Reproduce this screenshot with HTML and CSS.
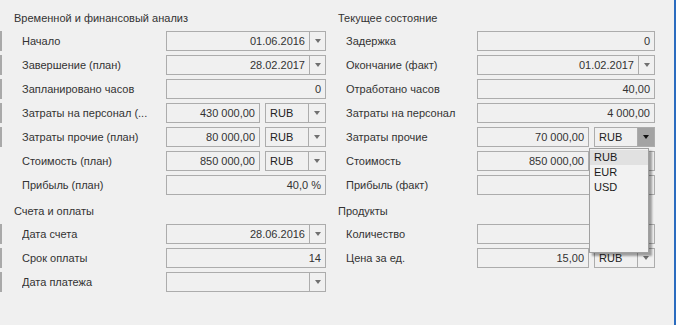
FILE: index.html
```html
<!DOCTYPE html>
<html lang="ru">
<head>
    <meta charset="UTF-8">
    <title>Анализ проекта</title>
    <link rel="stylesheet" href="styles.css">
</head>
<body>
<div class="window">
    <div class="col col-left">
        <div class="group-title">Временной и финансовый анализ</div>
        <div class="row mark">
            <span class="label">Начало</span>
            <div class="edit wide"><span class="value">01.06.2016</span><span class="btn date"></span></div>
        </div>
        <div class="row mark">
            <span class="label">Завершение (план)</span>
            <div class="edit wide"><span class="value">28.02.2017</span><span class="btn date"></span></div>
        </div>
        <div class="row mark">
            <span class="label">Запланировано часов</span>
            <div class="edit wide"><span class="value">0</span></div>
        </div>
        <div class="row mark">
            <span class="label">Затраты на персонал (...</span>
            <div class="edit num"><span class="value">430 000,00</span></div>
            <div class="edit cur"><span class="text">RUB</span><span class="btn"></span></div>
        </div>
        <div class="row mark">
            <span class="label">Затраты прочие (план)</span>
            <div class="edit num"><span class="value">80 000,00</span></div>
            <div class="edit cur"><span class="text">RUB</span><span class="btn"></span></div>
        </div>
        <div class="row">
            <span class="label">Стоимость (план)</span>
            <div class="edit num"><span class="value">850 000,00</span></div>
            <div class="edit cur"><span class="text">RUB</span><span class="btn"></span></div>
        </div>
        <div class="row">
            <span class="label">Прибыль (план)</span>
            <div class="edit wide"><span class="value">40,0 %</span></div>
        </div>

        <div class="group-title second">Счета и оплаты</div>
        <div class="row mark">
            <span class="label">Дата счета</span>
            <div class="edit wide"><span class="value">28.06.2016</span><span class="btn date"></span></div>
        </div>
        <div class="row mark">
            <span class="label">Срок оплаты</span>
            <div class="edit wide"><span class="value">14</span></div>
        </div>
        <div class="row mark">
            <span class="label">Дата платежа</span>
            <div class="edit wide"><span class="value"></span><span class="btn date"></span></div>
        </div>
    </div>

    <div class="col col-right">
        <div class="group-title">Текущее состояние</div>
        <div class="row">
            <span class="label">Задержка</span>
            <div class="edit wide"><span class="value">0</span></div>
        </div>
        <div class="row">
            <span class="label">Окончание (факт)</span>
            <div class="edit wide"><span class="value">01.02.2017</span><span class="btn date"></span></div>
        </div>
        <div class="row">
            <span class="label">Отработано часов</span>
            <div class="edit wide"><span class="value">40,00</span></div>
        </div>
        <div class="row">
            <span class="label">Затраты на персонал</span>
            <div class="edit wide"><span class="value">4 000,00</span></div>
        </div>
        <div class="row">
            <span class="label">Затраты прочие</span>
            <div class="edit num"><span class="value">70 000,00</span></div>
            <div class="edit cur open">
                <span class="text">RUB</span><span class="btn"></span>
                <ul class="popup">
                    <li class="selected">RUB</li>
                    <li>EUR</li>
                    <li>USD</li>
                </ul>
            </div>
        </div>
        <div class="row">
            <span class="label">Стоимость</span>
            <div class="edit num"><span class="value">850 000,00</span></div>
            <!-- covered by the open list -->
            <div class="edit cur"><span class="text"></span><span class="btn"></span></div>
        </div>
        <div class="row">
            <span class="label">Прибыль (факт)</span>
            <div class="edit wide"><span class="value"></span></div>
        </div>

        <div class="group-title second">Продукты</div>
        <div class="row">
            <span class="label">Количество</span>
            <div class="edit wide"><span class="value"></span></div>
        </div>
        <div class="row">
            <span class="label">Цена за ед.</span>
            <div class="edit num"><span class="value">15,00</span></div>
            <div class="edit cur"><span class="text">RUB</span><span class="btn"></span></div>
        </div>
    </div>
</div>
</body>
</html>
```

FILE: styles.css
```css
body {
    margin: 0;
    background-color: #f0f0f0;
    font-family: "Liberation Sans", Arial, sans-serif;
    font-size: 11px;
    color: #333;
}
.window {
    display: flex;
    width: 676px;
    height: 325px;
    box-sizing: border-box;
    border-right: 2px solid #2b6cbf;
    overflow: hidden;
}
.col {
    padding-top: 11px;
    box-sizing: border-box;
}
.col-left {
    width: 330px;
}
.col-right {
    width: 344px;
}
.group-title {
    height: 14px;
    line-height: 14px;
    margin-bottom: 6px;
    padding-left: 14px;
}
.group-title.second {
    margin-top: 9px;
}
.col-right .group-title {
    padding-left: 8px;
}
.row {
    display: flex;
    align-items: center;
    height: 20px;
    margin-bottom: 4px;
    padding-left: 22px;
}
.row.mark {
    border-left: 2px solid #a9a9a9;
    padding-left: 20px;
}
.col-right .row {
    padding-left: 16px;
}
.label {
    width: 144px;
    white-space: nowrap;
    overflow: hidden;
}
.col-right .label {
    width: 131px;
}

/* edits */
.edit {
    display: flex;
    height: 20px;
    box-sizing: border-box;
    border: 1px solid #acacac;
    line-height: 18px;
}
.edit.wide {
    width: 160px;
}
.edit.num {
    width: 94px;
    margin-right: 5px;
}
.edit.cur {
    width: 61px;
}
.col-right .edit.wide {
    width: 178px;
}
.col-right .edit.num {
    width: 112px;
}
.value {
    flex: 1;
    text-align: right;
    padding-right: 4px;
    white-space: nowrap;
}
.text {
    flex: 1;
    padding-left: 4px;
    color: #222;
}
.btn {
    position: relative;
    width: 17px;
    box-sizing: border-box;
    border-left: 1px solid #acacac;
}
.btn.date {
    width: 16px;
}
.btn::after {
    content: "";
    position: absolute;
    left: 50%;
    top: 7px;
    margin-left: -3px;
    border-top: 4px solid #707070;
    border-left: 3px solid transparent;
    border-right: 3px solid transparent;
}

/* open dropdown */
.edit.open {
    position: relative;
}
.edit.open .btn {
    background-color: #a3a3a3;
}
.edit.open .btn::after {
    border-top-color: #111;
}
.popup {
    position: absolute;
    left: -6px;
    top: 20px;
    z-index: 5;
    width: 60px;
    height: 105px;
    margin: 0;
    padding: 1px 0 0;
    list-style: none;
    box-sizing: border-box;
    background-color: #f2f2f2;
    border: 1px solid #a0a0a0;
    box-shadow: 3px 3px 2px rgba(0, 0, 0, 0.35);
}
.popup li {
    height: 15px;
    line-height: 15px;
    padding-left: 4px;
    color: #1a1a1a;
}
.popup li.selected {
    background-color: #e1e1e1;
}
```
